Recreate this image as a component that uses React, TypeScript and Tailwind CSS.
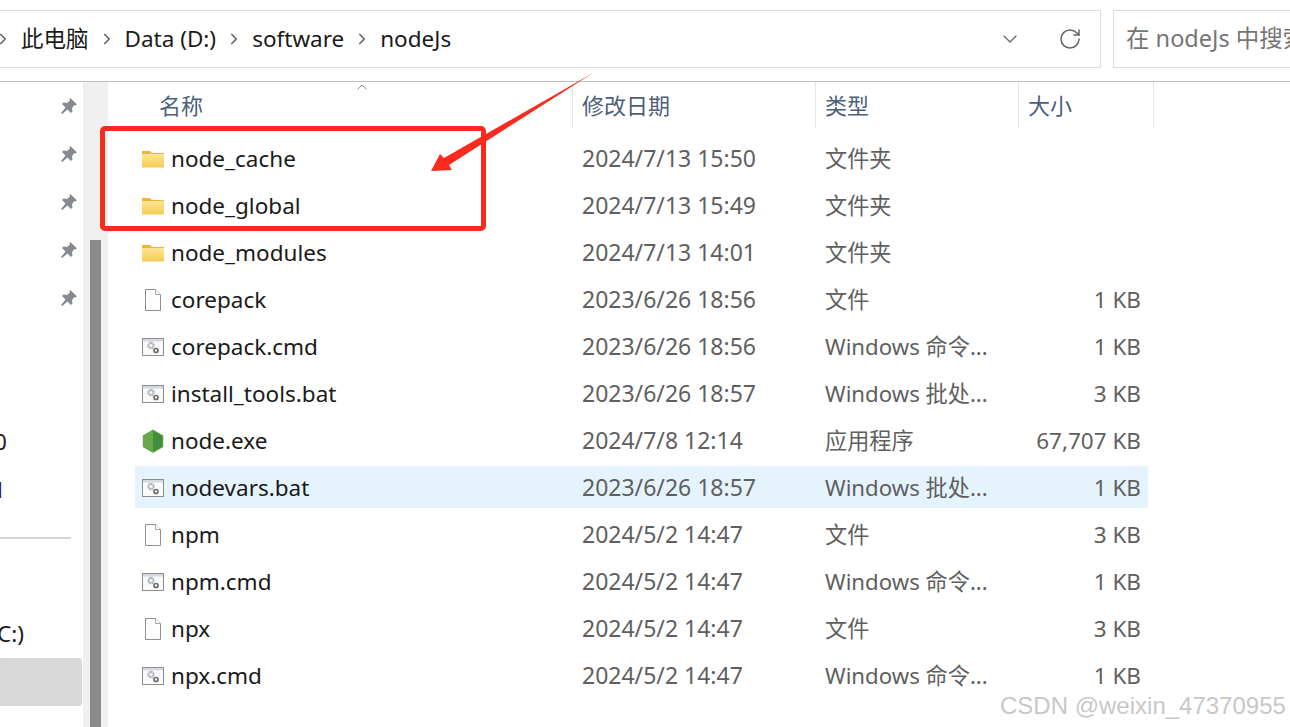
import { ChevronRight, ChevronDown, ChevronUp, RotateCw } from "lucide-react";

type FileKind = "folder" | "file" | "bat" | "node";

const files: { name: string; date: string; type: string; size: string; kind: FileKind; selected?: boolean }[] = [
  { name: "node_cache", date: "2024/7/13 15:50", type: "文件夹", size: "", kind: "folder" },
  { name: "node_global", date: "2024/7/13 15:49", type: "文件夹", size: "", kind: "folder" },
  { name: "node_modules", date: "2024/7/13 14:01", type: "文件夹", size: "", kind: "folder" },
  { name: "corepack", date: "2023/6/26 18:56", type: "文件", size: "1 KB", kind: "file" },
  { name: "corepack.cmd", date: "2023/6/26 18:56", type: "Windows 命令...", size: "1 KB", kind: "bat" },
  { name: "install_tools.bat", date: "2023/6/26 18:57", type: "Windows 批处...", size: "3 KB", kind: "bat" },
  { name: "node.exe", date: "2024/7/8 12:14", type: "应用程序", size: "67,707 KB", kind: "node" },
  { name: "nodevars.bat", date: "2023/6/26 18:57", type: "Windows 批处...", size: "1 KB", kind: "bat", selected: true },
  { name: "npm", date: "2024/5/2 14:47", type: "文件", size: "3 KB", kind: "file" },
  { name: "npm.cmd", date: "2024/5/2 14:47", type: "Windows 命令...", size: "1 KB", kind: "bat" },
  { name: "npx", date: "2024/5/2 14:47", type: "文件", size: "3 KB", kind: "file" },
  { name: "npx.cmd", date: "2024/5/2 14:47", type: "Windows 命令...", size: "1 KB", kind: "bat" },
];

function FileIcon({ kind }: { kind: FileKind }) {
  if (kind === "folder") {
    return (
      <svg width="24" height="24" viewBox="0 0 24 24">
        <defs>
          <linearGradient id="folderFill" x1="0" y1="0" x2="0" y2="1">
            <stop offset="0" stopColor="#fde596" />
            <stop offset="1" stopColor="#f7ca54" />
          </linearGradient>
        </defs>
        <path d="M1 4h8l2 2h12v14H1z" fill="#efb72e" />
        <rect x="1" y="7" width="22" height="13.500" fill="url(#folderFill)" />
      </svg>
    );
  }
  if (kind === "file") {
    return (
      <svg width="24" height="24" viewBox="0 0 24 24">
        <path d="M4.500 1.500h10l5 5v16h-15z" fill="#fdfdfd" stroke="#8f8f8f" />
        <path d="M14.500 1.500v5h5" fill="#fff" stroke="#a8a8a8" />
      </svg>
    );
  }
  if (kind === "node") {
    return (
      <svg width="24" height="24" viewBox="0 0 24 24">
        <path d="M12 1.500l9.500 5.500v10.500L12 23l-9.500-5.500V7z" fill="#66a84a" stroke="#66a84a" strokeLinejoin="round" strokeWidth="1.500" />
        <path d="M12 1.500l9.500 5.500v10.500L12 23z" fill="#3f8f3d" />
      </svg>
    );
  }
  return (
    <svg width="24" height="24" viewBox="0 0 24 24">
      <rect x="1.500" y="3.500" width="21" height="17" fill="#fafafa" stroke="#8d8d8d" />
      <rect x="2" y="4" width="20" height="2.500" fill="#d5d9de" />
      <circle cx="10" cy="10.500" r="2.600" fill="none" stroke="#a6adb5" strokeWidth="2.200" strokeDasharray="1.500 0.500" />
      <circle cx="15" cy="15.500" r="2" fill="none" stroke="#6e6e6e" strokeWidth="1.700" />
    </svg>
  );
}

function PinIcon() {
  return (
    <svg width="18" height="18" viewBox="0 0 18 18">
      <path d="M10.500 1l6.500 6.500-1.500 1-1-.5-2.500 3 .5 3.500-1.500 1.500-3.500-3.500L2 17l-1-1 4.500-5.500L2 7l1.500-1.500 3.500.5 3-2.500-.5-1z" fill="#868a8f" />
    </svg>
  );
}

function HeaderCell({ label, className }: { label: string; className: string }) {
  return (
    <div className={`flex h-full shrink-0 items-center border-r border-[#e5e5e5] ${className}`}>
      <span className="text-[22px] text-[#4c607a]">{label}</span>
    </div>
  );
}

function SideRow({ children, pin }: { children?: React.ReactNode; pin?: boolean }) {
  return (
    <div className="flex h-[48px] items-center justify-end overflow-hidden pr-[5px]">
      {pin && <PinIcon />}
      {children}
    </div>
  );
}

function Crumb() {
  return <ChevronRight size={18} strokeWidth={2.200} className="mx-[9px] text-[#666666]" />;
}

export default function App() {
  return (
    <div
      className="relative flex h-[727px] w-[1290px] flex-col overflow-hidden bg-white text-[22.500px] text-[#1a1a1a]"
      style={{ fontFamily: '"Noto Sans", "Open Sans", "Noto Sans CJK SC", sans-serif' }}
    >
      {/* address bar + search */}
      <div className="flex h-[82px] shrink-0 items-start gap-[12px] border-b border-[#bdbdbd] pt-[10px]">
        <div className="flex h-[58px] w-[1101px] shrink-0 items-center border-y border-r border-[#dcdcdc]">
          <ChevronRight size={18} strokeWidth={2.200} className="-ml-[6px] mr-[9px] text-[#666666]" />
          <span>此电脑</span>
          <Crumb />
          <span>Data (D:)</span>
          <Crumb />
          <span>software</span>
          <Crumb />
          <span>nodeJs</span>
          <div className="ml-auto flex items-center gap-[36px] pr-[18px] text-[#666666]">
            <ChevronDown size={24} strokeWidth={1.300} />
            <RotateCw size={24} strokeWidth={1.500} />
          </div>
        </div>
        <div className="flex h-[58px] flex-1 items-center whitespace-nowrap border-y border-l border-[#dcdcdc] pl-[12px] text-[23.500px] text-[#767676]">
          在 nodeJs 中搜索
        </div>
      </div>

      <div className="flex min-h-0 flex-1">
        {/* navigation pane */}
        <div className="w-[83px] shrink-0">
          <SideRow pin />
          <SideRow pin />
          <SideRow pin />
          <SideRow pin />
          <SideRow pin />
          <SideRow />
          <SideRow />
          <div className="flex h-[48px] items-center overflow-hidden">
            <span className="-ml-[6px]">0</span>
          </div>
          <div className="flex h-[48px] items-center overflow-hidden">
            <span className="-ml-[14px] text-[#2a1030]">N</span>
          </div>
          <div className="flex h-[48px] items-center">
            <div className="h-[2px] w-[71px] bg-[#d4d4d4]" />
          </div>
          <SideRow />
          <div className="flex h-[48px] items-center overflow-hidden">
            <span className="-ml-[3px]">C:)</span>
          </div>
          <div className="mr-[1px] h-[48px] rounded-r-[3px] bg-[#d9d9d9]" />
        </div>

        {/* scrollbar */}
        <div className="flex w-[25px] shrink-0 justify-center bg-[#f0f0f0] pr-[1px] pt-[158px]">
          <div className="h-full w-[11px] bg-[#8a8a8a]" />
        </div>

        {/* file list */}
        <div className="min-w-0 flex-1">
          <div className="flex h-[46px] pl-[51px]">
            <HeaderCell label="名称" className="w-[414px]" />
            <HeaderCell label="修改日期" className="w-[243px] pl-[9px]" />
            <HeaderCell label="类型" className="w-[203px] pl-[9px]" />
            <HeaderCell label="大小" className="w-[135px] pl-[9px]" />
          </div>
          <div className="flex w-[1040px] flex-col gap-[5px] pl-[27px] pt-[9px]">
            {files.map((f) => (
              <div
                key={f.name}
                className={`flex h-[42px] shrink-0 items-center whitespace-nowrap ${f.selected ? "bg-[#e5f3fd]" : ""}`}
              >
                <div className="flex w-[447px] shrink-0 items-center gap-[6px] pl-[6px] pt-[2px]">
                  <FileIcon kind={f.kind} />
                  <span>{f.name}</span>
                </div>
                <span className="w-[243px] shrink-0 pt-[1px] text-[23px] text-[#5f5f5f]">{f.date}</span>
                <span className="w-[203px] shrink-0 pt-[1px] text-[22.200px] text-[#5f5f5f]">{f.type}</span>
                <span className="flex-1 pr-[7px] pt-[2px] text-right text-[#5f5f5f]">{f.size}</span>
              </div>
            ))}
          </div>
        </div>
      </div>

      {/* sort caret */}
      <ChevronUp size={16} strokeWidth={1} className="absolute left-[354px] top-[79px] text-[#555555]" />

      {/* red annotation */}
      <div className="absolute left-[100px] top-[126px] h-[105px] w-[386px] rounded-[5px] border-[5px] border-[#fb2a1e]" />
      <svg className="absolute left-[425px] top-[70px]" width="175" height="105" viewBox="0 0 175 105">
        <path d="M6 101L15 84 19 88 168 3 24 95 27 100z" fill="#fb2a1e" />
      </svg>

      {/* watermark */}
      <div
        className="absolute left-[1000px] top-[692px] whitespace-nowrap text-[24px] leading-[27px] text-[#c8c8c8]"
        style={{ fontFamily: '"Liberation Sans", sans-serif' }}
      >
        CSDN @weixin_47370955
      </div>
    </div>
  );
}
